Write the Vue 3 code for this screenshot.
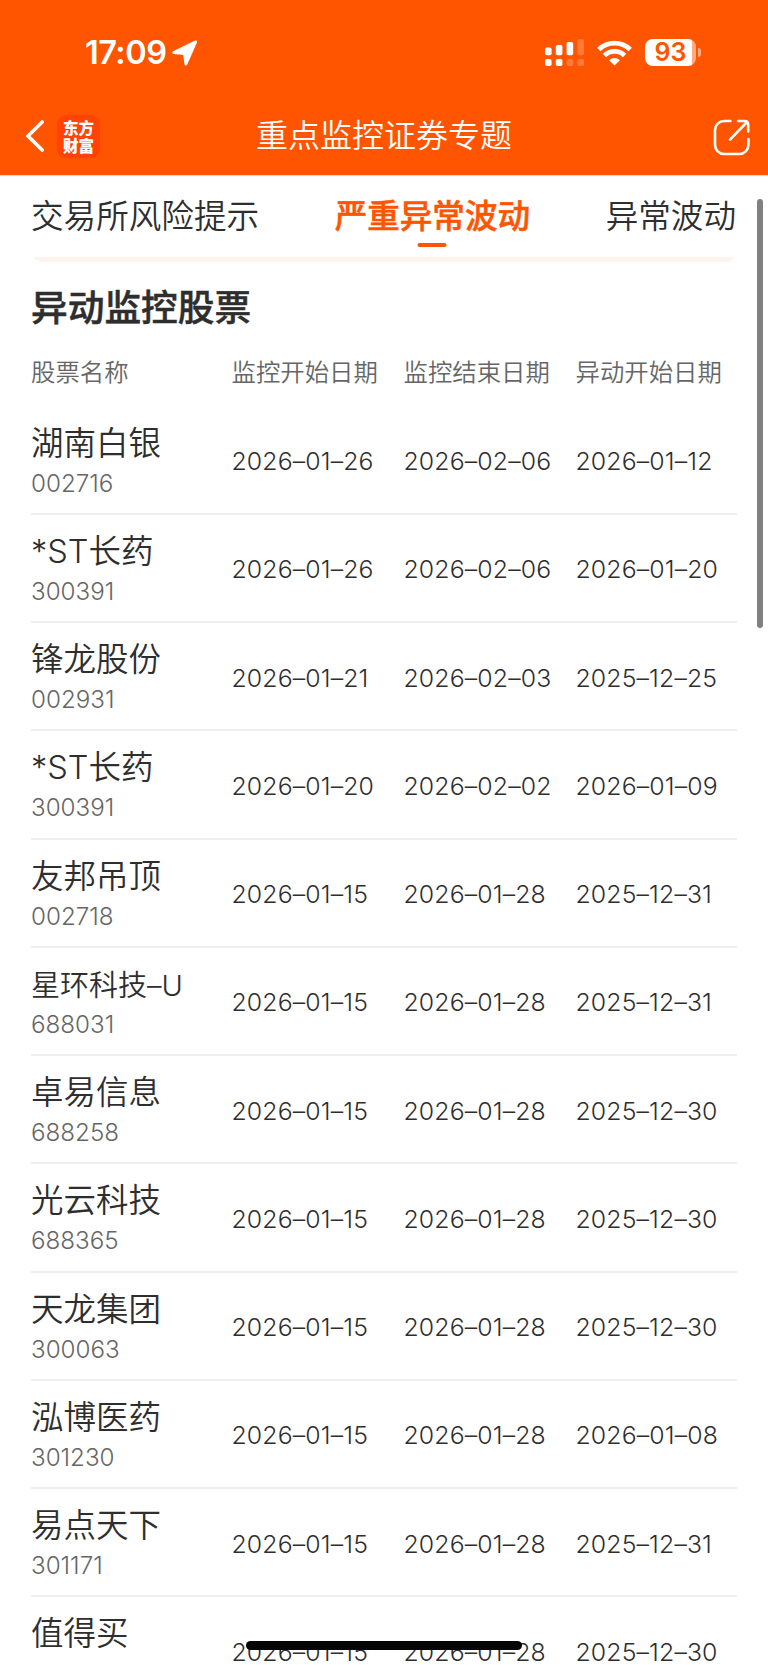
<script setup>
import { ref } from 'vue'

const tabs = ['交易所风险提示', '严重异常波动', '异常波动']
const activeTab = ref(1)

const columns = ['股票名称', '监控开始日期', '监控结束日期', '异动开始日期']

const stocks = [
  { name: '湖南白银', code: '002716', dates: ['2026–01–26', '2026–02–06', '2026–01–12'] },
  { name: '*ST长药', code: '300391', dates: ['2026–01–26', '2026–02–06', '2026–01–20'] },
  { name: '锋龙股份', code: '002931', dates: ['2026–01–21', '2026–02–03', '2025–12–25'] },
  { name: '*ST长药', code: '300391', dates: ['2026–01–20', '2026–02–02', '2026–01–09'] },
  { name: '友邦吊顶', code: '002718', dates: ['2026–01–15', '2026–01–28', '2025–12–31'] },
  { name: '星环科技–U', code: '688031', dates: ['2026–01–15', '2026–01–28', '2025–12–31'] },
  { name: '卓易信息', code: '688258', dates: ['2026–01–15', '2026–01–28', '2025–12–30'] },
  { name: '光云科技', code: '688365', dates: ['2026–01–15', '2026–01–28', '2025–12–30'] },
  { name: '天龙集团', code: '300063', dates: ['2026–01–15', '2026–01–28', '2025–12–30'] },
  { name: '泓博医药', code: '301230', dates: ['2026–01–15', '2026–01–28', '2026–01–08'] },
  { name: '易点天下', code: '301171', dates: ['2026–01–15', '2026–01–28', '2025–12–31'] },
  { name: '值得买', code: '', dates: ['2026–01–15', '2026–01–28', '2025–12–30'] }
]
</script>

<template>
  <div class="page">
    <header class="header">
      <div class="status-bar">
        <div class="status-left">
          <span class="clock">17:09</span>
          <svg class="location" width="26" height="26" viewBox="0 0 26 26">
            <path d="M23.6 1.8 13.9 24 12.6 13.6 1.8 12.6Z" fill="#fff" stroke="#fff" stroke-width="3" stroke-linejoin="round"/>
          </svg>
        </div>
        <div class="status-right">
          <svg width="39" height="27" viewBox="0 0 39 27" fill="#fff">
            <rect x="0" y="8.5" width="6.6" height="7.8" rx="1.8"/>
            <rect x="10.8" y="6" width="6.6" height="10.3" rx="1.8"/>
            <rect x="21.6" y="3" width="6.6" height="13.3" rx="1.8"/>
            <rect x="32.4" y="0" width="6.6" height="16.3" rx="1.8" opacity=".22"/>
            <rect x="0" y="20" width="6.6" height="7" rx="1.8"/>
            <rect x="10.8" y="20" width="6.6" height="7" rx="1.8"/>
            <rect x="21.6" y="20" width="6.6" height="7" rx="1.8" opacity=".22"/>
            <rect x="32.4" y="20" width="6.6" height="7" rx="1.8" opacity=".22"/>
          </svg>
          <svg class="wifi" width="35" height="26" viewBox="0 0 35 26" fill="none" stroke="#fff" stroke-width="4.8">
            <path d="M1.8 9.4a22.6 22.6 0 0 1 31.4 0"/>
            <path d="M7.4 15.5a14.4 14.4 0 0 1 20.2 0"/>
            <path d="M12.1 20.2a7.6 7.6 0 0 1 10.8 0L17.5 25.5Z" fill="#fff" stroke="none"/>
          </svg>
          <div class="battery">
            <span class="battery-level">93</span>
          </div>
          <span class="battery-tip"></span>
        </div>
      </div>
      <nav class="nav-bar">
        <div class="nav-left">
          <svg width="20" height="32" viewBox="0 0 20 32" fill="none" stroke="#fff" stroke-width="3.6">
            <path d="M17.2 2 3 16 17.2 30" stroke-linejoin="miter" stroke-linecap="round"/>
          </svg>
          <div class="logo"><span>东方</span><span>财富</span></div>
        </div>
        <h1 class="nav-title">重点监控证券专题</h1>
        <svg class="share" width="37" height="37" viewBox="0 0 37 37" fill="none" stroke="#fff" stroke-width="2.6">
          <path d="M17.4 2H11.2A9.2 9.2 0 0 0 2 11.2V25.8A9.2 9.2 0 0 0 11.2 35H26.2A9.2 9.2 0 0 0 35.4 25.8V20" stroke-linecap="round"/>
          <path d="M25 2H31.6Q35.2 2 35.2 5.6V12.6M34 3 17 20.6" stroke-linecap="round"/>
        </svg>
      </nav>
    </header>

    <div class="tabs">
      <button v-for="(tab, i) in tabs" :key="tab" class="tab" :class="{ active: i === activeTab }" @click="activeTab = i">
        {{ tab }}
      </button>
    </div>

    <main class="content">
      <div class="banner-clip"><div class="banner-edge"></div></div>
      <h2 class="section-title">异动监控股票</h2>
      <div class="grid table-head">
        <span v-for="col in columns" :key="col">{{ col }}</span>
      </div>
      <div v-for="(stock, i) in stocks" :key="i" class="grid row">
        <div class="stock">
          <span class="name" :class="{ small: stock.name.length > 5 }">{{ stock.name }}</span>
          <span class="code">{{ stock.code }}</span>
        </div>
        <span v-for="(date, j) in stock.dates" :key="j" class="date">{{ date }}</span>
      </div>
    </main>

    <div class="scrollbar"></div>
    <div class="home-indicator"></div>
  </div>
</template>

<style>
body {
  background: #fff;
  overflow: hidden;
}
</style>

<style scoped>
.page {
  position: relative;
  width: 768px;
  height: 1665px;
  overflow: hidden;
  background: #fff;
  color: #2e2e2e;
  font-family: Inter, "Noto Sans CJK SC", sans-serif;
  font-weight: 350;
}

.header {
  height: 175px;
  background: #ff5500;
  border-bottom: 1px solid #ffd3bd;
  color: #fff;
}

.status-bar {
  display: flex;
  justify-content: space-between;
  height: 97px;
  padding: 8px 67px 0 85px;
  box-sizing: border-box;
}

.status-left,
.status-right {
  display: flex;
  align-items: center;
}

.clock {
  font-size: 32.5px;
  font-weight: 600;
  line-height: 40px;
  letter-spacing: -0.5px;
}

.location {
  margin-left: 6px;
}

.wifi {
  margin: 0 13px 0 13px;
}

.battery {
  width: 51px;
  height: 27px;
  border-radius: 8px;
  background: linear-gradient(90deg, #fff 47px, #ffaa80 47px);
}

.battery-level {
  display: block;
  color: #ff5500;
  font-size: 25px;
  font-weight: 600;
  line-height: 27px;
  text-align: center;
}

.battery-tip {
  width: 3px;
  height: 9px;
  margin-left: 2px;
  border-radius: 0 4px 4px 0;
  background: #ffaa80;
}

.nav-bar {
  display: grid;
  grid-template-columns: 231px 1fr auto;
  align-items: center;
  height: 78px;
  padding: 0 18px 0 25px;
}

.nav-left {
  display: flex;
  align-items: center;
  gap: 12px;
}

.logo {
  display: flex;
  flex-direction: column;
  align-items: center;
  justify-content: center;
  width: 43px;
  height: 43px;
  border-radius: 9px;
  background: #ff4208;
  font-family: "Noto Sans CJK SC", sans-serif;
  font-size: 15.5px;
  font-weight: 900;
  line-height: 18px;
}

.nav-title {
  margin: 0;
  font-size: 32px;
  font-weight: 350;
  line-height: 40px;
}

.share {
  margin-top: 2px;
}

.tabs {
  display: flex;
  justify-content: space-between;
  height: 81px;
  padding: 0 32px 0 31px;
}

.tab {
  position: relative;
  padding: 0;
  border: 0;
  background: none;
  color: inherit;
  font: inherit;
  font-size: 32.6px;
  line-height: 81px;
}

.tab.active {
  color: #ff5500;
  font-weight: 500;
  -webkit-text-stroke: 0.5px #ff5500;
}

.tab.active::after {
  content: '';
  position: absolute;
  bottom: 10px;
  left: 50%;
  width: 29px;
  height: 4px;
  border-radius: 2px;
  background: #ff5500;
  transform: translateX(-50%);
}

.content {
  padding: 0 31px;
}

/* only the bottom edge of the banner is scrolled into view */
.banner-clip {
  display: flex;
  align-items: flex-end;
  height: 5px;
  overflow: hidden;
}

.banner-edge {
  flex: 1;
  height: 40px;
  border-radius: 12px;
  background: #fff3ee;
}

.section-title {
  margin: 0;
  padding-top: 21px;
  font-size: 36.7px;
  font-weight: 500;
  line-height: 50px;
  -webkit-text-stroke: 0.5px #2e2e2e;
}

.grid {
  display: grid;
  grid-template-columns: 200.5px 172px 172px 1fr;
  align-items: center;
}

.table-head {
  height: 73.5px;
  padding-top: 1px;
  box-sizing: border-box;
  color: #666;
  font-size: 24.4px;
}

.row {
  box-sizing: border-box;
  height: 108.25px;
  padding-top: 3px;
  border-bottom: 2px solid #efefef;
}

.stock {
  display: flex;
  flex-direction: column;
  gap: 1px;
  padding-top: 2px;
}

.name {
  font-size: 32.5px;
  line-height: 42px;
}

.name.small {
  padding-top: 2px;
  font-size: 29px;
  line-height: 40px;
}

.code {
  height: 36px;
  color: #666;
  font-size: 24.2px;
  line-height: 36px;
}

.date {
  font-size: 24.8px;
  letter-spacing: 0.15px;
}

/* native overlays drawn on top of the page */
.scrollbar {
  position: absolute;
  top: 199px;
  right: 5px;
  width: 6px;
  height: 429px;
  border-radius: 3px;
  background: #808080;
}

.home-indicator {
  position: absolute;
  bottom: 15px;
  left: 50%;
  width: 276px;
  height: 9px;
  border-radius: 5px;
  background: #050505;
  transform: translateX(-50%);
}
</style>
